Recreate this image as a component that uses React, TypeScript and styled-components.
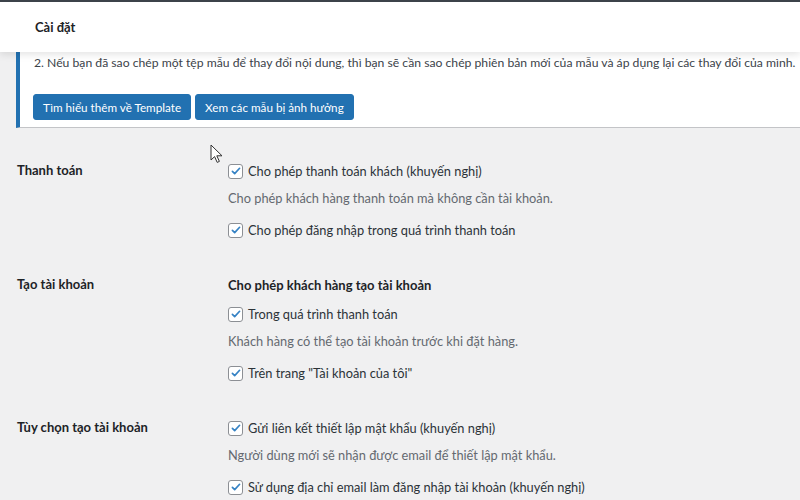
import React from "react";
import styled, { createGlobalStyle } from "styled-components";

const GlobalStyle = createGlobalStyle`
  html, body {
    margin: 0;
    padding: 0;
    background: #f0f0f1;
    overflow: hidden;
  }
  body {
    font-family: Lato, "Noto Sans", "Liberation Sans", sans-serif;
    font-size: 12.8px;
    color: #2c3338;
  }
`;

type Option = { label: string; checked: boolean; description?: string };

type Section = {
  title: string;
  heading?: string;
  options: Option[];
};

const sections: Section[] = [
  {
    title: "Thanh toán",
    options: [
      {
        label: "Cho phép thanh toán khách (khuyến nghị)",
        checked: true,
        description: "Cho phép khách hàng thanh toán mà không cần tài khoản.",
      },
      { label: "Cho phép đăng nhập trong quá trình thanh toán", checked: true },
    ],
  },
  {
    title: "Tạo tài khoản",
    heading: "Cho phép khách hàng tạo tài khoản",
    options: [
      {
        label: "Trong quá trình thanh toán",
        checked: true,
        description: "Khách hàng có thể tạo tài khoản trước khi đặt hàng.",
      },
      { label: 'Trên trang "Tài khoản của tôi"', checked: true },
    ],
  },
  {
    title: "Tùy chọn tạo tài khoản",
    options: [
      {
        label: "Gửi liên kết thiết lập mật khẩu (khuyến nghị)",
        checked: true,
        description: "Người dùng mới sẽ nhận được email để thiết lập mật khẩu.",
      },
      {
        label: "Sử dụng địa chỉ email làm đăng nhập tài khoản (khuyến nghị)",
        checked: true,
      },
    ],
  },
];

const App = () => (
  <Page>
    <GlobalStyle />
    <Header>
      <Title>Cài đặt</Title>
    </Header>
    <Content>
      <Notice>
        <NoticeText>
          2. Nếu bạn đã sao chép một tệp mẫu để thay đổi nội dung, thì bạn sẽ cần
          sao chép phiên bản mới của mẫu và áp dụng lại các thay đổi của mình.
        </NoticeText>
        <NoticeButtons>
          <PrimaryButton>Tìm hiểu thêm về Template</PrimaryButton>
          <PrimaryButton>Xem các mẫu bị ảnh hưởng</PrimaryButton>
        </NoticeButtons>
      </Notice>
      <FormTable>
        {sections.map((s) => (
          <SectionRow key={s.title}>
            <RowLabel>{s.title}</RowLabel>
            <Fields>
              {s.heading && <FieldHeading>{s.heading}</FieldHeading>}
              {s.options.map((o) => (
                <React.Fragment key={o.label}>
                  <CheckRow>
                    <CheckBox $checked={o.checked}>
                      {o.checked && (
                        <svg width="12" height="12" viewBox="0 0 20 20">
                          <path
                            d="M4 10.5l3.8 3.8L16 5.5"
                            fill="none"
                            stroke="#3582c4"
                            strokeWidth="2.8"
                            strokeLinecap="round"
                            strokeLinejoin="round"
                          />
                        </svg>
                      )}
                    </CheckBox>
                    {o.label}
                  </CheckRow>
                  {o.description && <Description>{o.description}</Description>}
                </React.Fragment>
              ))}
            </Fields>
          </SectionRow>
        ))}
      </FormTable>
    </Content>
    <Cursor width="14" height="20" viewBox="0 0 14 20">
      <path
        d="M1 1v15l3.6-3.4 2.6 5.8 2.2-1-2.6-5.6H12z"
        fill="#fff"
        stroke="#333"
        strokeWidth="1"
        strokeLinejoin="round"
      />
    </Cursor>
  </Page>
);

export default App;

const Page = styled.div`
  position: relative;
  width: 800px;
  height: 500px;
  overflow: hidden;
`;

const Header = styled.div`
  position: relative;
  z-index: 2;
  height: 50px;
  border-top: 2px solid #3c434a;
  background: #fff;
  display: flex;
  align-items: center;
  padding-left: 35px;
  box-shadow: 0 2px 8px rgba(0, 0, 0, 0.12);
`;

const Title = styled.h1`
  margin: 0;
  font-size: 13px;
  font-weight: 700;
  color: #1d2327;
`;

const Content = styled.div`
  padding-left: 16px;
`;

const Notice = styled.div`
  margin-right: -20px;
  background: #fff;
  border-left: 4px solid #2271b1;
  border-bottom: 1px solid #c3c4c7;
  padding: 1px 12px 7px 14px;
`;

const NoticeText = styled.p`
  margin: 0;
  line-height: 20px;
  font-size: 12.2px;
  color: #3c434a;
  white-space: nowrap;
`;

const NoticeButtons = styled.div`
  display: flex;
  gap: 4px;
  margin-top: 21px;
  margin-left: -1px;
`;

const PrimaryButton = styled.button`
  height: 26px;
  padding: 0 9px;
  border: 1px solid #2271b1;
  border-radius: 3px;
  background: #2271b1;
  color: #fff;
  font-family: inherit;
  font-size: 11.7px;
  cursor: pointer;
`;

const FormTable = styled.div`
  display: flex;
  flex-direction: column;
  gap: 35px;
  padding-top: 33px;
`;

const SectionRow = styled.div`
  display: grid;
  grid-template-columns: 212px 1fr;
`;

const RowLabel = styled.div`
  padding-left: 1px;
  margin-top: -1px;
  line-height: 20px;
  font-size: 13px;
  font-weight: 700;
  color: #1d2327;
`;

const Fields = styled.div`
  display: flex;
  flex-direction: column;
`;

const FieldHeading = styled.div`
  line-height: 20px;
  font-size: 13px;
  font-weight: 700;
  color: #1d2327;
  margin-bottom: 9px;
`;

const CheckRow = styled.label`
  display: flex;
  align-items: center;
  gap: 5px;
  line-height: 20px;
  color: #2c3338;
  & + & {
    margin-top: 12px;
  }
`;

const CheckBox = styled.span<{ $checked: boolean }>`
  width: 13px;
  height: 13px;
  border: 1px solid #8c8f94;
  border-radius: 3px;
  background: #fff;
  display: flex;
  align-items: center;
  justify-content: center;
`;

const Description = styled.p`
  margin: 7px 0 12px;
  line-height: 20px;
  color: #646970;
`;

const Cursor = styled.svg`
  position: absolute;
  left: 210px;
  top: 144px;
`;
